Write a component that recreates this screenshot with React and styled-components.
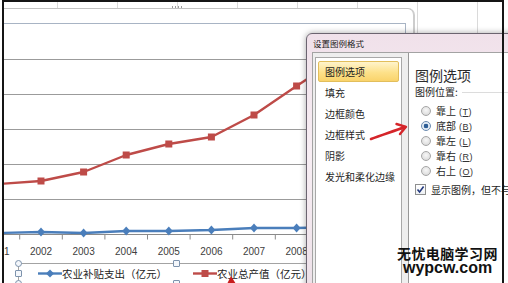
import React from 'react';
import styled, { createGlobalStyle } from 'styled-components';

const CJK = `"Noto Sans CJK SC", "Liberation Sans", sans-serif`;

const GlobalStyle = createGlobalStyle`
  html, body {
    margin: 0;
    padding: 0;
    background: #fff;
    overflow: hidden;
  }
  body {
    font-family: "Liberation Sans", "Noto Sans CJK SC", sans-serif;
  }
`;

const Frame = styled.div`
  position: relative;
  width: 508px;
  height: 283px;
  overflow: hidden;
  background: #fff;
`;

const FrameBorder = styled.div`
  position: absolute;
  left: 2px;
  top: 0;
  width: 502px;
  height: 300px;
  box-sizing: border-box;
  border-top: 2px solid #151515;
  border-left: 2px solid #151515;
  border-right: 2px solid #151515;
  pointer-events: none;
  z-index: 5;
`;

const Sheet = styled.div`
  height: 100%;
  box-sizing: border-box;
  padding: 8px 0 0 4px;
  background-color: #fff;
  background-image: linear-gradient(to right, #dadada 1px, transparent 1px);
  background-size: 60px 100%;
  background-position: 57px 0;
`;

const ChartBox = styled.div`
  position: relative;
  width: 411px;
  height: 290px;
  box-sizing: border-box;
  padding-top: 14px;
  border-top: 1px solid #c2c2c2;
  border-right: 2px solid #cdcdcd;
  border-top-right-radius: 7px;
  background: #fff;
`;

const Grip = styled.div`
  position: absolute;
  top: -3px;
  left: 168px;
  display: flex;
  gap: 2px;
`;

const GripDot = styled.span`
  width: 1px;
  height: 2px;
  background: #9c9c9c;
`;

const Plot = styled.div`
  width: 401px;
  border-top: 1px solid #a8b4c4;
  border-right: 1px solid #a8b4c4;

  svg {
    display: block;
  }
`;

const Legend = styled.div`
  position: relative;
  margin: 3px 0 0 14px;
  height: 19px;
  padding-left: 19px;
  display: flex;
  align-items: center;
  border-top: 1px solid #a3a3a3;
  border-left: 1px solid #a3a3a3;
  font-family: ${CJK};
  font-size: 10.5px;
  color: #222;
  white-space: nowrap;
`;

const LegendItem = styled.div`
  display: flex;
  align-items: center;

  & + & {
    margin-left: 26px;
  }

  svg {
    display: block;
  }
`;

const Handle = styled.span`
  position: absolute;
  left: ${(p) => p.$x}px;
  top: ${(p) => p.$y}px;
  width: 7px;
  height: 7px;
  box-sizing: border-box;
  border: 1px solid #7d93ad;
  border-radius: ${(p) => (p.$round ? '50%' : '1px')};
  background: #f4f7fb;
`;

const Dialog = styled.div`
  position: absolute;
  left: 306px;
  top: 33px;
  width: 220px;
  height: 270px;
  box-sizing: border-box;
  display: flex;
  flex-direction: column;
  padding-left: 5px;
  border: 1px solid #6b6470;
  border-top-left-radius: 6px;
  background: linear-gradient(180deg, #f0e1ea 0%, #f8eef4 45%, #ecdfe7 100%);
  box-shadow: 0 0 6px rgba(0, 0, 0, 0.35);
  z-index: 2;
`;

const Title = styled.div`
  height: 18px;
  line-height: 18px;
  padding-left: 1px;
  font-family: ${CJK};
  font-size: 8.5px;
  color: #1a1a1a;
`;

const Body = styled.div`
  flex: 1;
  display: flex;
  align-items: flex-start;
  padding-left: 2px;
  background: #eeeeee;
  border-top: 1px solid #a3a3a3;
  border-left: 1px solid #a3a3a3;
`;

const NavList = styled.div`
  width: 87px;
  height: 240px;
  box-sizing: border-box;
  margin-top: 4px;
  padding: 3px 1px;
  background: #fff;
  border: 1px solid #a8a8a8;
`;

const NavItem = styled.div`
  height: 21px;
  box-sizing: border-box;
  margin: 0 1px;
  padding-left: 6px;
  line-height: 19px;
  font-family: ${CJK};
  font-size: 10px;
  color: #1e1e1e;
  border: 1px solid ${(p) => (p.$active ? '#e2be5c' : 'transparent')};
  border-radius: 2px;
  background: ${(p) =>
    p.$active ? 'linear-gradient(180deg, #fff4cc 0%, #fde18a 55%, #f9d36b 100%)' : 'transparent'};
`;

const Content = styled.div`
  flex: 1;
  align-self: stretch;
  margin-left: 6px;
  padding: 12px 0 0 6px;
  background: #fff;
  border-left: 1px solid #979797;
  font-family: ${CJK};
  color: #1e1e1e;
  white-space: nowrap;
  overflow: hidden;
`;

const Heading = styled.div`
  font-size: 14px;
  line-height: 20px;
  color: #2b2b2b;
`;

const GroupLabel = styled.div`
  display: flex;
  align-items: center;
  font-size: 10px;
  line-height: 14px;

  &::after {
    content: '';
    flex: 1;
    height: 1px;
    margin-left: 4px;
    background: #dcdcdc;
  }
`;

const RadioList = styled.div`
  margin-top: 4px;
  padding-left: 6px;
`;

const OptionRow = styled.div`
  display: flex;
  align-items: center;
  gap: 5px;
  height: ${(p) => p.$h || 15}px;
  font-size: 10px;
`;

const Radio = styled.span`
  width: 10px;
  height: 10px;
  box-sizing: border-box;
  border-radius: 50%;
  border: 1px solid ${(p) => (p.$checked ? '#6b8bb0' : '#a6a6a6')};
  background: ${(p) =>
    p.$checked
      ? 'radial-gradient(circle, #2c5d95 0, #2c5d95 2px, #dfe9f3 2.6px, #eef3f8 100%)'
      : 'radial-gradient(circle at 50% 40%, #f7f7f7 0, #e2e2e2 60%, #cfcfcf 100%)'};
`;

const Mnemonic = styled.span`
  margin-left: 3px;
  font-family: "Liberation Sans", sans-serif;
  font-size: 9px;
  letter-spacing: 0.5px;
  color: #333;

  u {
    text-decoration: underline;
  }
`;

const CheckRow = styled(OptionRow)`
  margin-top: 3px;
`;

const Checkbox = styled.span`
  width: 11px;
  height: 11px;
  box-sizing: border-box;
  border: 1px solid #8e8f8f;
  background: linear-gradient(180deg, #fff 0%, #eef1f4 100%);

  svg {
    display: block;
  }
`;

const Watermark = styled.div`
  position: absolute;
  left: 397px;
  top: 246px;
  color: #111;
  font-weight: 700;
  z-index: 3;
`;

const WatermarkName = styled.div`
  font-family: ${CJK};
  font-size: 14px;
  line-height: 14px;
  letter-spacing: 0.4px;
`;

const WatermarkUrl = styled.div`
  padding-left: 6px;
  font-family: "Liberation Sans", sans-serif;
  font-size: 16px;
  line-height: 15px;
`;

const Marks = styled.svg`
  position: absolute;
  left: 0;
  top: 0;
  pointer-events: none;
  z-index: 4;
`;

const years = [2001, 2002, 2003, 2004, 2005, 2006, 2007, 2008, 2009];
const output = [184, 181, 172, 155, 144, 137, 115, 86, 58];
const subsidy = [233, 232, 233, 231, 231, 230, 228, 228, 227];
const colX = (i) => -1.6 + 42.6 * i - 4;
const gridY = [35.5, 70.5, 105.5, 140.5, 175.5];

const RED = '#be4b48';
const BLUE = '#4a7ebb';

const LineChart = () => {
  const redPts = output.map((v, i) => `${colX(i)},${v - 24}`).join(' ');
  const bluePts = subsidy.map((v, i) => `${colX(i)},${v - 24}`).join(' ');
  return (
    <svg width="401" height="236" viewBox="0 0 401 236">
      {gridY.map((y) => (
        <line key={y} x1="0" x2="401" y1={y} y2={y} stroke="#9b9b9b" strokeWidth="1" />
      ))}
      <line x1="0" x2="401" y1="210.5" y2="210.5" stroke="#8a8a8a" strokeWidth="1" />
      {years.slice(1).map((y, i) => (
        <line
          key={y}
          x1={colX(i + 1) - 21.3}
          x2={colX(i + 1) - 21.3}
          y1="210.5"
          y2="215.5"
          stroke="#8a8a8a"
        />
      ))}
      <polyline points={redPts} fill="none" stroke={RED} strokeWidth="2.4" strokeLinejoin="round" />
      <polyline points={bluePts} fill="none" stroke={BLUE} strokeWidth="2.4" strokeLinejoin="round" />
      {output.map((v, i) => (
        <rect key={i} x={colX(i) - 3.5} y={v - 24 - 3.5} width="7" height="7" fill={RED} />
      ))}
      {subsidy.map((v, i) => (
        <polygon
          key={i}
          points={`${colX(i)},${v - 28.5} ${colX(i) + 4},${v - 24} ${colX(i)},${v - 19.5} ${colX(i) - 4},${v - 24}`}
          fill={BLUE}
        />
      ))}
      {years.map((y, i) => (
        <text
          key={y}
          x={colX(i)}
          y="230.6"
          textAnchor="middle"
          fontFamily="Liberation Sans, sans-serif"
          fontSize="10"
          fill="#404040"
        >
          {y}
        </text>
      ))}
    </svg>
  );
};

const LegendKey = ({ color, square }) => (
  <svg width="24" height="9" viewBox="0 0 24 9">
    <line x1="0" x2="24" y1="4.5" y2="4.5" stroke={color} strokeWidth="2.4" />
    {square ? (
      <rect x="8.5" y="1" width="7" height="7" fill={color} />
    ) : (
      <polygon points="12,0.5 16,4.5 12,8.5 8,4.5" fill={color} />
    )}
  </svg>
);

const navItems = ['图例选项', '填充', '边框颜色', '边框样式', '阴影', '发光和柔化边缘'];
const positions = [
  ['靠上', 'T'],
  ['底部', 'B'],
  ['靠左', 'L'],
  ['靠右', 'R'],
  ['右上', 'O'],
];

const App = () => {
  return (
    <>
      <GlobalStyle />
      <Frame>
        <Sheet>
          <ChartBox>
            <Grip>
              <GripDot />
              <GripDot />
              <GripDot />
              <GripDot />
            </Grip>
            <Plot>
              <LineChart />
            </Plot>
            <Legend>
              <Handle $round $x={-4} $y={-4} />
              <Handle $x={154} $y={-4} />
              <Handle $x={-4} $y={6} />
              <Handle $round $x={-4} $y={16} />
              <Handle $x={154} $y={16} />
              <LegendItem>
                <LegendKey color={BLUE} />
                <span>农业补贴支出（亿元）</span>
              </LegendItem>
              <LegendItem>
                <LegendKey color={RED} square />
                <span>农业总产值（亿元）</span>
              </LegendItem>
            </Legend>
          </ChartBox>
        </Sheet>

        <Dialog>
          <Title>设置图例格式</Title>
          <Body>
            <NavList>
              {navItems.map((item, i) => (
                <NavItem key={item} $active={i === 0}>
                  {item}
                </NavItem>
              ))}
            </NavList>
            <Content>
              <Heading>图例选项</Heading>
              <GroupLabel>图例位置:</GroupLabel>
              <RadioList>
                {positions.map(([label, key]) => (
                  <OptionRow key={key}>
                    <Radio $checked={key === 'B'} />
                    <span>
                      {label}
                      <Mnemonic>
                        (<u>{key}</u>)
                      </Mnemonic>
                    </span>
                  </OptionRow>
                ))}
              </RadioList>
              <CheckRow $h={16}>
                <Checkbox>
                  <svg width="9" height="9" viewBox="0 0 9 9">
                    <polyline
                      points="1.5,4.5 3.6,7 7.6,1.6"
                      fill="none"
                      stroke="#23397e"
                      strokeWidth="1.6"
                    />
                  </svg>
                </Checkbox>
                <span>显示图例，但不与图表重叠</span>
              </CheckRow>
            </Content>
          </Body>
        </Dialog>

        <Watermark>
          <WatermarkName>无忧电脑学习网</WatermarkName>
          <WatermarkUrl>wypcw.com</WatermarkUrl>
        </Watermark>

        <Marks width="508" height="283" viewBox="0 0 508 283">
          <path
            d="M371 139 C 382 135, 394 131, 405 127"
            fill="none"
            stroke="#d5252a"
            strokeWidth="2.6"
            strokeLinecap="round"
          />
          <path
            d="M396.5 124 L406 126.8 L400 134"
            fill="none"
            stroke="#d5252a"
            strokeWidth="2.4"
            strokeLinecap="round"
            strokeLinejoin="round"
          />
          <polygon points="231,276 227,284 236,284" fill="#c81e1e" />
        </Marks>
        <FrameBorder />
      </Frame>
    </>
  );
};

export default App;
